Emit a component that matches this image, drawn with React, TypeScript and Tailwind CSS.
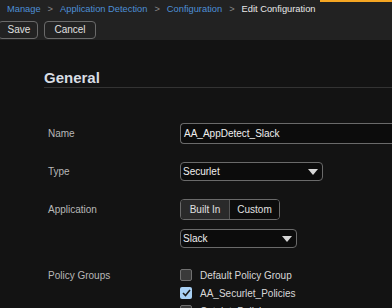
import React from "react";

const Caret = () => (
  <svg width="10" height="6" viewBox="0 0 10 6" className="ml-auto mr-[4px]">
    <path d="M0 0 L10 0 L5 6 Z" fill="#d8d8d8" />
  </svg>
);

export default function App() {
  return (
    <div className="w-[392px] h-[308px] overflow-hidden bg-[#131313] text-[10px]" style={{ fontFamily: "'Liberation Sans', Arial, sans-serif" }}>
      <div className="relative h-[40px] bg-[#222222]">
        <div className="absolute top-0 left-[320px] right-0 h-[2px] bg-[#f5a623]" />
        <div className="flex items-center gap-[7px] pl-[7px] pt-[2px] h-[18px] text-[9.3px]">
          <span className="text-[#4d8fd6]">Manage</span>
          <span className="text-[#8a8a8a]">&gt;</span>
          <span className="text-[#4d8fd6]">Application Detection</span>
          <span className="text-[#8a8a8a]">&gt;</span>
          <span className="text-[#4d8fd6]">Configuration</span>
          <span className="text-[#8a8a8a]">&gt;</span>
          <span className="text-[#e8e8e8]">Edit Configuration</span>
        </div>
        <div className="flex gap-[6px] mt-[3px]">
          <button className="h-[18px] w-[40px] ml-[-2px] pl-[2px] rounded-[4px] border border-[#6a6a6a] text-[#e0e0e0] text-[10px] leading-none">Save</button>
          <button className="h-[18px] w-[52px] rounded-[4px] border border-[#6a6a6a] text-[#e0e0e0] text-[10px] leading-none">Cancel</button>
        </div>
      </div>
      <div className="pl-[44px] pt-[29px]">
        <div className="text-[15px] font-bold text-[#d8dde4] leading-[17px] pb-[1px] border-b border-[#333333]">General</div>
      </div>
      <div className="pl-[48px] pt-[35px] text-[#b8b8b8]">
        <div className="flex items-center h-[21px]">
          <span className="w-[132px]">Name</span>
          <div className="flex-1 h-[21px] rounded-l-[4px] border border-r-0 border-[#6a6a6a] bg-[#0c0c0c] text-[#f0f0f0] flex items-center pl-[3px]">AA_AppDetect_Slack</div>
        </div>
        <div className="flex items-center h-[19px] mt-[18px]">
          <span className="w-[132px]">Type</span>
          <div className="w-[143px] h-[19px] rounded-[4px] border border-[#6a6a6a] bg-[#0c0c0c] text-[#f0f0f0] flex items-center pl-[2px]">Securlet<Caret /></div>
        </div>
        <div className="flex mt-[18px]">
          <span className="w-[132px] h-[21px] flex items-center">Application</span>
          <div className="flex flex-col gap-[9px]">
            <div className="flex w-[100px] h-[21px] rounded-[4px] border border-[#6a6a6a] overflow-hidden text-[#e0e0e0]">
              <div className="w-[49px] bg-[#2a2a2a] flex items-center justify-center border-r border-[#555555]">Built In</div>
              <div className="flex-1 bg-[#0c0c0c] flex items-center justify-center">Custom</div>
            </div>
            <div className="w-[117px] h-[19px] rounded-[4px] border border-[#6a6a6a] bg-[#0c0c0c] text-[#f0f0f0] flex items-center pl-[2px]">Slack<Caret /></div>
          </div>
        </div>
        <div className="flex mt-[21px]">
          <span className="w-[132px] h-[12px] flex items-center">Policy Groups</span>
          <div className="flex flex-col gap-[6px] text-[#d8d8d8]">
            <div className="flex items-center gap-[8px] h-[12px]">
              <div className="w-[12px] h-[12px] rounded-[2px] border border-[#707070] bg-[#3a3a3a]" />
              <span>Default Policy Group</span>
            </div>
            <div className="flex items-center gap-[8px] h-[12px]">
              <div className="w-[12px] h-[12px] rounded-[2px] bg-[#a9d1f5] flex items-center justify-center">
                <svg width="9" height="8" viewBox="0 0 9 8"><path d="M1 4 L3.5 6.5 L8 1" stroke="#1a1a1a" strokeWidth="1.6" fill="none" /></svg>
              </div>
              <span>AA_Securlet_Policies</span>
            </div>
            <div className="flex items-center gap-[8px] h-[12px]">
              <div className="w-[12px] h-[12px] rounded-[2px] border border-[#707070] bg-[#3a3a3a]" />
              <span>Catalet_Policies</span>
            </div>
          </div>
        </div>
      </div>
    </div>
  );
}
